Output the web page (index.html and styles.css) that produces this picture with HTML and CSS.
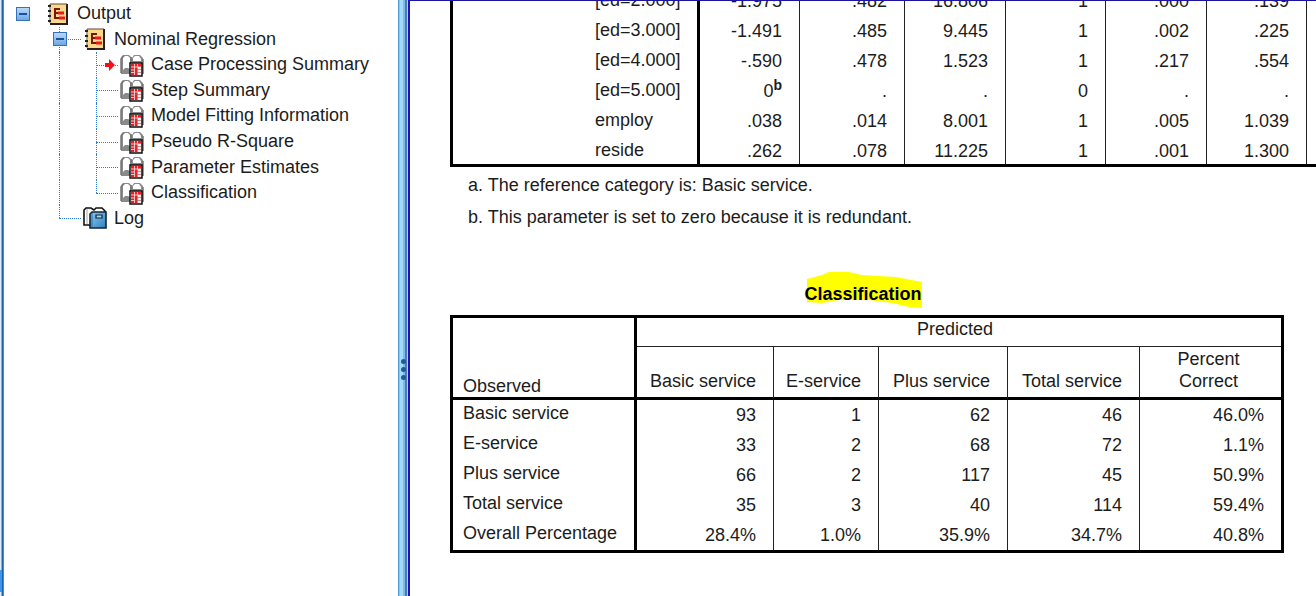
FILE: index.html
```html
<!DOCTYPE html>
<html lang="en">
<head>
<meta charset="utf-8">
<title>Output</title>
<link rel="stylesheet" href="styles.css">
</head>
<body>
<svg width="0" height="0" class="defs" aria-hidden="true">
  <defs>
    <linearGradient id="logFill" x1="0" y1="0" x2="1" y2="1">
      <stop offset="0" stop-color="#8ccbf0"/><stop offset="1" stop-color="#2f7fc0"/>
    </linearGradient>
    <symbol id="i-output" viewBox="0 0 24 24">
      <path d="M5 2h17v20H5z" fill="#f9d98a"/>
      <path d="M21 2v20H4" fill="none" stroke="#2a1f1c" stroke-width="2"/>
      <path d="M4 21V2h17" fill="none" stroke="#5a4a38" stroke-width="1"/>
      <path d="M2 4h3M2 9h3M2 14h3M2 19h3" stroke="#222" stroke-width="2"/>
      <path d="M8 7h6M9 7v9h4M9 11h4" fill="none" stroke="#7c1408" stroke-width="2"/>
      <path d="M12 11h6M13 16h6" stroke="#f01818" stroke-width="3"/>
    </symbol>
    <symbol id="i-table" viewBox="0 0 24 24">
      <path d="M1 20V5l2-3h6l3 3 2-3h6l3 3v16H1z" fill="#8a8a8a"/>
      <path d="M3 17V5l2-2h3l2 2v11l-2-1H5z" fill="#fff"/>
      <path d="M13 8V5l2-2h4l2 3v2z" fill="#fff"/>
      <path d="M1 20V6l2-3M11 4v6M23 6v15" fill="none" stroke="#777" stroke-width="1.5"/>
      <path d="M10 10h12v13H10z" fill="#fbeaea" stroke="#111" stroke-width="1.5"/>
      <path d="M11 11h10v3H11zM11 14h6v8h-6z" fill="#f01c24"/>
      <path d="M17.500 14v8M11 16.500h10M11 19.500h10" stroke="#a05050" stroke-width=".6"/>
      <path d="M14.500 11v11M17.500 11v3M11 14h10M11 17h3M11 19.500h3" stroke="#fff" stroke-width=".7"/>
    </symbol>
    <symbol id="i-log" viewBox="0 0 24 24">
      <path d="M1 19V4l2-2h5l3 2 2-2h6l3 3v4H8v11l-2-1H3z" fill="#fff" stroke="#111" stroke-width="1.6"/>
      <path d="M4 3v15" stroke="#aaa"/>
      <path d="M7 8l2-2h14v16H7z" fill="url(#logFill)" stroke="#102438" stroke-width="1.6"/>
      <path d="M9 7v14" stroke="#2c6ca0"/>
      <path d="M13 9h6v3h-6z" fill="#9fd8f5" stroke="#102438" stroke-width="1.2"/>
    </symbol>
  </defs>
</svg>
<div class="viewer">
  <div class="frame-edge"><span></span></div>
  <nav class="outline" aria-label="Outline">
    <ul class="tree">
      <li class="row">
        <span class="slot"><button class="toggle" aria-label="Collapse Output"></button></span>
        <svg class="icon"><use href="#i-output"/></svg><span>Output</span>
      </li>
      <li class="row">
        <span class="slot"></span>
        <span class="slot line branch"><button class="toggle" aria-label="Collapse Nominal Regression"></button></span>
        <svg class="icon"><use href="#i-output"/></svg><span>Nominal Regression</span>
      </li>
      <li class="row">
        <span class="slot"></span><span class="slot line"></span>
        <span class="slot line branch"><svg class="arrow" viewBox="0 0 12 12"><path d="M1 4h4V0l6 6-6 6V8H1z" fill="#f00f1a"/></svg></span>
        <svg class="icon"><use href="#i-table"/></svg><span>Case Processing Summary</span>
      </li>
      <li class="row">
        <span class="slot"></span><span class="slot line"></span><span class="slot line branch"></span>
        <svg class="icon"><use href="#i-table"/></svg><span>Step Summary</span>
      </li>
      <li class="row">
        <span class="slot"></span><span class="slot line"></span><span class="slot line branch"></span>
        <svg class="icon"><use href="#i-table"/></svg><span>Model Fitting Information</span>
      </li>
      <li class="row">
        <span class="slot"></span><span class="slot line"></span><span class="slot line branch"></span>
        <svg class="icon"><use href="#i-table"/></svg><span>Pseudo R-Square</span>
      </li>
      <li class="row">
        <span class="slot"></span><span class="slot line"></span><span class="slot line branch"></span>
        <svg class="icon"><use href="#i-table"/></svg><span>Parameter Estimates</span>
      </li>
      <li class="row">
        <span class="slot"></span><span class="slot line"></span><span class="slot line branch end"></span>
        <svg class="icon"><use href="#i-table"/></svg><span>Classification</span>
      </li>
      <li class="row">
        <span class="slot"></span><span class="slot line branch end"></span>
        <svg class="icon"><use href="#i-log"/></svg><span>Log</span>
      </li>
    </ul>
  </nav>
  <div class="splitter" role="separator" aria-orientation="vertical"><i></i><i></i><i></i></div>
  <main class="document">
    <table class="pivot estimates">
      <colgroup><col class="c-label"><col class="c-100"><col class="c-105"><col class="c-101"><col class="c-100"><col class="c-101"><col class="c-100"><col class="c-100"></colgroup>
      <tbody>
        <tr><th scope="row">[ed=2.000]</th><td>-1.975</td><td>.482</td><td>16.806</td><td>1</td><td>.000</td><td>.139</td><td></td></tr>
        <tr><th scope="row">[ed=3.000]</th><td>-1.491</td><td>.485</td><td>9.445</td><td>1</td><td>.002</td><td>.225</td><td></td></tr>
        <tr><th scope="row">[ed=4.000]</th><td>-.590</td><td>.478</td><td>1.523</td><td>1</td><td>.217</td><td>.554</td><td></td></tr>
        <tr><th scope="row">[ed=5.000]</th><td>0<sup>b</sup></td><td>.</td><td>.</td><td>0</td><td>.</td><td>.</td><td></td></tr>
        <tr><th scope="row">employ</th><td>.038</td><td>.014</td><td>8.001</td><td>1</td><td>.005</td><td>1.039</td><td></td></tr>
        <tr><th scope="row">reside</th><td>.262</td><td>.078</td><td>11.225</td><td>1</td><td>.001</td><td>1.300</td><td></td></tr>
      </tbody>
    </table>
    <div class="notes">
      <p>a. The reference category is: Basic service.</p>
      <p>b. This parameter is set to zero because it is redundant.</p>
    </div>
    <section class="classification">
      <h2 class="title"><span class="marked"><svg class="marker" viewBox="0 0 116 36" aria-hidden="true"><path d="M2 7L17 3 24 0H44L57 3 91 5 117 10V36L104 35 87 31 64 28H34L17 31 2 30z" fill="#ff0"/></svg><span>Classification</span></span></h2>
      <table class="pivot">
        <colgroup><col class="c-184"><col class="c-137"><col class="c-105"><col class="c-129"><col class="c-132"><col class="c-141"></colgroup>
        <thead>
          <tr><th rowspan="2" class="observed">Observed</th><th colspan="5" class="predicted">Predicted</th></tr>
          <tr class="names"><th>Basic service</th><th>E-service</th><th>Plus service</th><th>Total service</th><th>Percent Correct</th></tr>
        </thead>
        <tbody>
          <tr><th scope="row">Basic service</th><td>93</td><td>1</td><td>62</td><td>46</td><td>46.0%</td></tr>
          <tr><th scope="row">E-service</th><td>33</td><td>2</td><td>68</td><td>72</td><td>1.1%</td></tr>
          <tr><th scope="row">Plus service</th><td>66</td><td>2</td><td>117</td><td>45</td><td>50.9%</td></tr>
          <tr><th scope="row">Total service</th><td>35</td><td>3</td><td>40</td><td>114</td><td>59.4%</td></tr>
          <tr><th scope="row">Overall Percentage</th><td>28.4%</td><td>1.0%</td><td>35.9%</td><td>34.7%</td><td>40.8%</td></tr>
        </tbody>
      </table>
    </section>
  </main>
</div>
</body>
</html>
```
FILE: styles.css
```css
* { box-sizing: border-box; }

body {
  margin: 0;
  background: #fff;
  color: #1c1c1c;
  font-family: "Liberation Sans", Arial, sans-serif;
  font-size: 18px;
}

.defs { position: absolute; }

.viewer {
  display: grid;
  grid-template-columns: 4px 394px 12px minmax(0, 1fr);
  height: 100vh;
  overflow: hidden;
}

.frame-edge {
  display: flex;
  align-items: flex-end;
  padding-bottom: 4px;
  background: linear-gradient(to right, #dfeaf7 0 1px, #7fb2e2 1px 2px, #1b62ae 2px 3px, #4b8bd0 3px 4px);
}
.frame-edge span { width: 2px; height: 22px; background: #3f97ec; }

/* Outline tree */
.outline { padding-top: 1px; }
.tree {
  display: grid;
  grid-auto-rows: 1fr;
  height: 230px;
  margin: 0;
  padding: 0;
  list-style: none;
}
.row { display: flex; align-items: center; white-space: nowrap; }
.icon { flex: none; width: 24px; height: 24px; margin: 0 7px 0 5px; }
.slot {
  position: relative;
  display: flex;
  flex: none;
  align-items: center;
  justify-content: center;
  align-self: stretch;
  width: 37px;
}
.line::before {
  content: "";
  position: absolute;
  top: 0;
  bottom: 0;
  left: 18px;
  border-left: 1px dotted #2f7fd8;
}
.line.end::before { bottom: 50%; }
.branch::after {
  content: "";
  position: absolute;
  top: 50%;
  left: 18px;
  right: -3px;
  border-top: 1px dotted #2f7fd8;
}
.toggle {
  position: relative;
  z-index: 1;
  width: 14px;
  height: 14px;
  padding: 0;
  border: 1px solid #3a70b8;
  background: linear-gradient(#1f4f94, #1f4f94) center / 8px 2px no-repeat, linear-gradient(#b8d8f8, #6ea8e8);
}
.arrow { position: absolute; z-index: 1; left: 26px; width: 12px; height: 12px; }

.splitter {
  display: flex;
  flex-direction: column;
  align-items: center;
  justify-content: center;
  gap: 3px;
  padding: 142px 2px 0 0;
  background: linear-gradient(to right, #4d97cc 0 1px, #8cc8ee 1px 2px, #a4dafa 2px 5px, #80b8e8 5px 7px, #4a7cbc 7px 9px, #c4c8fa 9px 10px, #1c14b4 10px 12px);
}
.splitter i { width: 5px; height: 5px; border-radius: 50%; background: #245a94; }

/* Output document */
.document {
  overflow: hidden;
  padding-left: 40px;
  border-top: 1px solid #1c14a4;
}

.pivot {
  table-layout: fixed;
  width: max-content;
  border: 3px solid #000;
  border-spacing: 0;
}
.pivot th { font-weight: normal; }
.pivot td, .pivot th { height: 30px; padding: 0; line-height: 20px; border-right: 1px solid #222; }
.pivot td { padding-right: 17px; text-align: right; }
.pivot tbody th {
  padding: 0 0 4px 10px;
  border-right: 3px solid #000;
  text-align: left;
  white-space: nowrap;
}
.classification .pivot tr > :last-child { border-right: 0; }
.classification .pivot { width: 834px; }

.estimates { width: 953px; margin-top: -17px; border-top: 0; }
.estimates tbody th { padding: 2px 0 0 142px; }
.estimates td { padding-top: 4px; }
sup { font-size: 14px; font-weight: bold; line-height: 0; }

.c-label { width: 247px; }
.c-100 { width: 100px; }
.c-101 { width: 101px; }
.c-105 { width: 105px; }
.c-129 { width: 129px; }
.c-132 { width: 132px; }
.c-137 { width: 137px; }
.c-141 { width: 141px; }
.c-184 { width: 184px; }

.notes { padding: 2px 0 0 18px; }
.notes p { margin: 0; line-height: 32px; }

.title {
  width: 826px;
  margin: 47px 0 7px;
  font-size: 18px;
  line-height: 28px;
  text-align: center;
  color: #000;
}
.marked { position: relative; display: inline-block; }
.marked span { position: relative; }
.marker { position: absolute; left: 1px; top: -8px; width: 116px; height: 36px; overflow: visible; }

.pivot thead .observed {
  padding: 0 0 1px 10px;
  border-right: 3px solid #000;
  border-bottom: 3px solid #000;
  text-align: left;
  vertical-align: bottom;
}
.pivot thead .predicted { height: 29px; padding: 0 8px 6px 0; border-bottom: 1px solid #222; }
.pivot .names th {
  height: 53px;
  padding: 0 17px 5px 0;
  border-bottom: 3px solid #000;
  line-height: 22px;
  text-align: right;
  vertical-align: bottom;
}
.pivot .names th:last-child { padding: 0 32px 5px 28px; text-align: center; }
```
